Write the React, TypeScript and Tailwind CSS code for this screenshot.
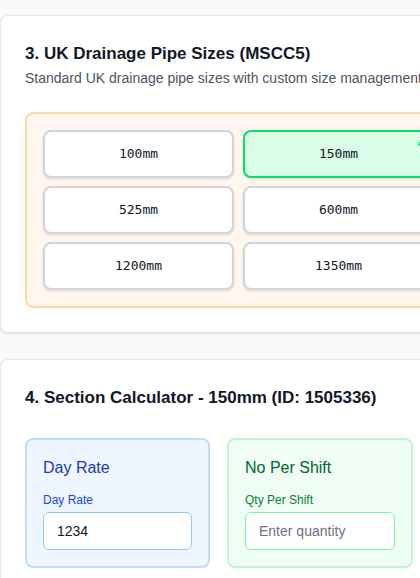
import { Pencil } from "lucide-react";

const sizes = [
  ["100", "150", "225", "300"],
  ["525", "600", "675", "750"],
  ["1200", "1350", "1500", "1800"],
];

function PipeButton({ size, active }: { size: string; active?: boolean }) {
  return (
    <button
      className={
        "relative h-[48px] rounded-lg border-2 shadow-sm [font-family:'DejaVu_Sans_Mono',monospace] text-[13px] text-gray-900 " +
        (active ? "border-green-400 bg-green-100" : "border-gray-300 bg-white")
      }
    >
      {size}mm
      {active && (
        <Pencil className="absolute right-1 top-1 h-[10px] w-[10px] text-green-400" strokeWidth={3} />
      )}
    </button>
  );
}

export default function App() {
  return (
    <div className="w-[420px] h-[578px] overflow-hidden bg-gray-50 [font-family:'Liberation_Sans',Arial,sans-serif]">
      <div className="w-[900px] pt-[15px] flex flex-col gap-[26px]">
        <div className="rounded-lg border border-gray-200 bg-white shadow-sm p-6">
          <h2 className="text-[17px] font-bold text-gray-900 leading-7">3. UK Drainage Pipe Sizes (MSCC5)</h2>
          <p className="text-sm text-gray-600 leading-5">Standard UK drainage pipe sizes with custom size management</p>
          <div className="mt-6 rounded-lg border-2 border-orange-200 bg-orange-50 p-4">
            <div className="grid grid-cols-[191px_191px_191px_191px] gap-x-[9px] gap-y-2">
              {sizes.flat().map((s) => (
                <PipeButton key={s} size={s} active={s === "150"} />
              ))}
            </div>
          </div>
        </div>

        <div className="rounded-lg border border-gray-200 bg-white shadow-sm p-6">
          <h2 className="text-[17px] font-bold text-gray-900 leading-7">4. Section Calculator - 150mm (ID: 1505336)</h2>
          <div className="mt-[26px] flex gap-[17px]">
            <div className="w-[185px] rounded-lg border-2 border-blue-200 bg-blue-50 p-4">
              <h3 className="text-base text-blue-800 leading-6 mb-3">Day Rate</h3>
              <label className="block text-xs text-blue-700 mb-1">Day Rate</label>
              <input
                defaultValue="1234"
                className="w-full h-[38px] rounded-md border border-blue-300 bg-white px-[13px] text-sm text-gray-900 outline-none"
              />
            </div>
            <div className="w-[186px] rounded-lg border-2 border-green-200 bg-green-50 p-4">
              <h3 className="text-base text-green-800 leading-6 mb-3">No Per Shift</h3>
              <label className="block text-xs text-green-700 mb-1">Qty Per Shift</label>
              <input
                placeholder="Enter quantity"
                className="w-full h-[38px] rounded-md border border-green-300 bg-white px-[13px] text-sm text-gray-900 placeholder:text-gray-500 outline-none"
              />
            </div>
            <div className="w-[185px] rounded-lg border-2 border-purple-200 bg-purple-50 p-4 h-[130px]" />
          </div>
        </div>
      </div>
    </div>
  );
}
